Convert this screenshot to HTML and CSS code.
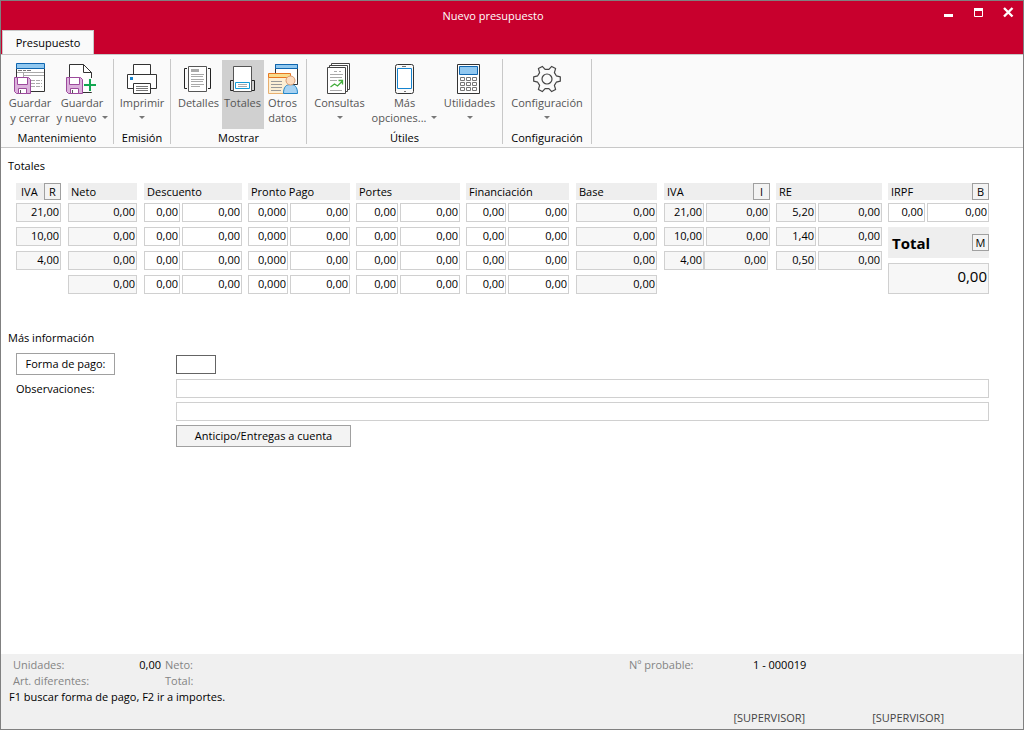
FILE: index.html
```html
<!DOCTYPE html>
<html lang="es">
<head>
<meta charset="utf-8">
<meta name="viewport" content="width=device-width, initial-scale=1">
<title>Nuevo presupuesto</title>
<link rel="stylesheet" href="styles.css">
</head>
<body>
<svg class="defs" width="0" height="0" aria-hidden="true">
  <symbol id="floppy" viewBox="0 0 17 17">
    <path d="M.5.5h14l2 2v14H2.500l-2-2z" fill="#dcb2dc" stroke="#9c4a9c"/>
    <path d="M3.500.5h10v7h-10z" fill="#fff" stroke="#9c4a9c"/>
    <path d="M4.500 16.500v-5h8v5z" fill="#fff" stroke="#9c4a9c"/>
    <path d="M6.500 13v3" stroke="#555"/>
  </symbol>
</svg>
<div class="window">
  <header class="titlebar">
    <div class="titlebar-row">
      <h1 class="title">Nuevo presupuesto</h1>
      <div class="controls">
        <button class="control" aria-label="Minimizar"><svg width="11" height="11"><path d="M1 7h9v3H1z" fill="#fff"/></svg></button>
        <button class="control" aria-label="Maximizar"><svg width="11" height="11"><path d="M1.500 1.500h8v8h-8z" fill="none" stroke="#fff"/><path d="M1 1h9v3H1z" fill="#fff"/></svg></button>
        <button class="control" aria-label="Cerrar"><svg width="11" height="11"><path d="M1 1l8.500 8.500M9.500 1L1 9.500" stroke="#fff" stroke-width="2.400"/></svg></button>
      </div>
    </div>
    <div class="tabs"><button class="tab">Presupuesto</button></div>
  </header>

  <nav class="ribbon">
    <section class="group group-save">
      <div class="tools">
        <button class="tool">
          <svg class="icon" width="32" height="32" fill="none">
            <path d="M2.500 6.500h28v23h-28z" fill="#fff" stroke="#333"/>
            <path d="M2.500 1.500h28v5h-28z" fill="#91c8f0" stroke="#0f66b0"/>
            <path d="M4 8.500h4m1 0h3m1 0h4" stroke="#777"/>
            <path d="M3 10.500h27M9.500 11v4M10 13.500h20" stroke="#aaa"/>
            <path d="M17 18.500h11M17 21.500h11M17 24.500h11" stroke="#aaa" stroke-dasharray="4 1"/>
            <use href="#floppy" y="15" width="17" height="17"/>
          </svg>
          <span>Guardar</span><span>y cerrar</span>
        </button>
        <button class="tool">
          <svg class="icon" width="32" height="32" fill="none">
            <path d="M3.500 2.500h14l8 8v20h-22z" fill="#fff" stroke="#333"/>
            <path d="M17.500 2.500v8h8M18 3l7 7" stroke="#333"/>
            <use href="#floppy" y="15" width="17" height="17"/>
            <path d="M24 16v14M17 23h14" stroke="#fafafa" stroke-width="4"/>
            <path d="M24 17v12M18 23h12" stroke="#12a650" stroke-width="2"/>
          </svg>
          <span>Guardar</span><span class="drop">y nuevo</span>
        </button>
      </div>
      <h2 class="group-name">Mantenimiento</h2>
    </section>
    <section class="group group-print">
      <div class="tools">
        <button class="tool">
          <svg class="icon" width="32" height="32" fill="none" stroke="#333">
            <path d="M7.500 2.500h17v10h-17z" fill="#fff"/>
            <path d="M1.500 12.500h29v14h-29z" fill="#fff"/>
            <path d="M7.500 21.500h17v10h-17z" fill="#fff"/>
            <path d="M10 24.500h12M10 26.500h12M10 28.500h12" stroke="#777"/>
            <path d="M4 15h3v3H4z" fill="#1684cf" stroke="none"/>
          </svg>
          <span>Imprimir</span><span class="drop"></span>
        </button>
      </div>
      <h2 class="group-name">Emisión</h2>
    </section>
    <section class="group group-show">
      <div class="tools">
        <button class="tool tool-details">
          <svg class="icon" viewBox="1 0 32 32" width="32" height="32" fill="none">
            <path d="M6.500 4.500h18v25h-18z" fill="#fff" stroke="#555"/>
            <path d="M5 6.500H2.500v20H5M26 6.500h2.500v20H26" stroke="#222"/>
            <path d="M9 7h8v3H9z" fill="#aaa"/>
            <path d="M9 12.500h13M9 14.500h12M9 17.500h13M9 19.500h12M9 22.500h13M9 24.500h9" stroke="#aaa"/>
          </svg>
          <span>Detalles</span>
        </button>
        <button class="tool tool-totals" aria-pressed="true">
          <svg class="icon" width="32" height="32" fill="none">
            <path d="M6.500 4.500h18v25h-18z" fill="#fff" stroke="#555"/>
            <path d="M6 18.500H3.500v10H6M25 18.500h2.500v10H25" stroke="#222"/>
            <path d="M8.500 20.500h14v6h-14z" fill="#fff" stroke="#159bd7"/>
            <path d="M11 22.500h9M11 24.500h9" stroke="#aaa"/>
          </svg>
          <span>Totales</span>
        </button>
        <button class="tool tool-other">
          <svg class="icon" width="32" height="32" fill="none">
            <path d="M8.500 2.500h22v20h-22z" fill="#fff" stroke="#333"/>
            <path d="M8.500 2.500h22v4h-22z" fill="#91c8f0" stroke="#0f66b0"/>
            <path d="M1.500 15.500h22v16h-22z" fill="#fcefd5" stroke="#e8b070"/>
            <path d="M1.500 11.500h22v4h-22z" fill="#f9dc8c" stroke="#e87722"/>
            <path d="M4 19.500h11M4 22.500h11M4 25.500h11M4 28.500h10" stroke="#999"/>
            <path d="M16.500 31.500c0-7 3-9 7-9s7 2 7 9z" fill="#a7d2f2" stroke="#2085c8"/>
            <circle cx="23.500" cy="18.500" r="4.500" fill="#fcdcc0" stroke="#d99a70"/>
          </svg>
          <span>Otros</span><span>datos</span>
        </button>
      </div>
      <h2 class="group-name">Mostrar</h2>
    </section>
    <section class="group group-utils">
      <div class="tools">
        <button class="tool">
          <svg class="icon" viewBox="-1 0 32 32" width="32" height="32" fill="none">
            <path d="M7.500 1.500h18v26h-18z" fill="#fff" stroke="#444"/>
            <path d="M5.500 3.500h18v26h-18z" fill="#fff" stroke="#444"/>
            <path d="M3.500 5.500h18v26h-18z" fill="#fff" stroke="#444"/>
            <path d="M10 9.500h3m2 0h2M6 12.500h13M6 15.500h12M6 18.500h7M6 28.500h12" stroke="#aaa"/>
            <path d="M6.500 25l4-3 3 2 5-5M14.500 18.500h4v4" stroke="#43ad3c" stroke-width="1.300"/>
          </svg>
          <span>Consultas</span><span class="drop"></span>
        </button>
        <button class="tool">
          <svg class="icon" width="32" height="32" fill="none">
            <rect x="7.500" y="2.500" width="18" height="29" rx="2" fill="#fafafa" stroke="#333"/>
            <path d="M9.500 6.500h14v20h-14z" fill="#fff" stroke="#1684cf"/>
            <path d="M14 4.500h4M16 29.500h2" stroke="#777"/>
          </svg>
          <span>Más</span><span class="drop">opciones...</span>
        </button>
        <button class="tool">
          <svg class="icon" width="32" height="32" fill="none">
            <path d="M4.500 2.500h22v29h-22z" fill="#fff" stroke="#333"/>
            <path d="M6.500 4.500h18v8h-18z" fill="#91c8f0" stroke="#0f66b0"/>
            <path d="M7.500 15.500h4v3h-4zM13.500 15.500h4v3h-4zM19.500 15.500h4v3h-4zM7.500 20.500h4v3h-4zM13.500 20.500h4v3h-4zM19.500 20.500h4v3h-4zM7.500 25.500h4v3h-4zM13.500 25.500h4v3h-4zM19.500 25.500h4v3h-4z" stroke="#777"/>
          </svg>
          <span>Utilidades</span><span class="drop"></span>
        </button>
      </div>
      <h2 class="group-name">Útiles</h2>
    </section>
    <section class="group group-config">
      <div class="tools">
        <button class="tool">
          <svg class="icon" width="32" height="32" fill="none" stroke="#444" stroke-width="1.200" stroke-linejoin="round">
            <path d="M25.300 13.800L29.300 14.800V19.200L25.300 20.200L23.400 23.400L24.600 27.400L20.700 29.600L17.900 26.600H14.100L11.300 29.600L7.400 27.400L8.600 23.400L6.700 20.200L2.700 19.200V14.800L6.700 13.800L8.600 10.600L7.400 6.600L11.300 4.400L14.100 7.400H17.900L20.700 4.400L24.600 6.600L23.400 10.600z"/>
            <circle cx="16" cy="17" r="5"/>
          </svg>
          <span>Configuración</span><span class="drop"></span>
        </button>
      </div>
      <h2 class="group-name">Configuración</h2>
    </section>
  </nav>

  <main class="content">
    <h2 class="section-name">Totales</h2>
    <div class="totals">
      <section class="column short">
        <div class="head"><span>IVA</span><button class="key">R</button></div>
        <input class="field locked" aria-label="IVA 1" value="21,00" readonly>
        <input class="field locked" aria-label="IVA 2" value="10,00" readonly>
        <input class="field locked" aria-label="IVA 3" value="4,00" readonly>
      </section>
      <section class="column short">
        <div class="head">Neto</div>
        <input class="field locked" aria-label="Neto 1" value="0,00" readonly>
        <input class="field locked" aria-label="Neto 2" value="0,00" readonly>
        <input class="field locked" aria-label="Neto 3" value="0,00" readonly>
        <input class="field locked" aria-label="Neto 4" value="0,00" readonly>
      </section>
      <section class="column">
        <div class="head">Descuento</div>
        <div class="pair pair-36"><input class="field" aria-label="Descuento % 1" value="0,00"><input class="field" aria-label="Descuento 1" value="0,00"></div>
        <div class="pair pair-36"><input class="field" aria-label="Descuento % 2" value="0,00"><input class="field" aria-label="Descuento 2" value="0,00"></div>
        <div class="pair pair-36"><input class="field" aria-label="Descuento % 3" value="0,00"><input class="field" aria-label="Descuento 3" value="0,00"></div>
        <div class="pair pair-36"><input class="field" aria-label="Descuento % 4" value="0,00"><input class="field" aria-label="Descuento 4" value="0,00"></div>
      </section>
      <section class="column">
        <div class="head">Pronto Pago</div>
        <div class="pair"><input class="field" aria-label="Pronto Pago % 1" value="0,000"><input class="field" aria-label="Pronto Pago 1" value="0,00"></div>
        <div class="pair"><input class="field" aria-label="Pronto Pago % 2" value="0,000"><input class="field" aria-label="Pronto Pago 2" value="0,00"></div>
        <div class="pair"><input class="field" aria-label="Pronto Pago % 3" value="0,000"><input class="field" aria-label="Pronto Pago 3" value="0,00"></div>
        <div class="pair"><input class="field" aria-label="Pronto Pago % 4" value="0,000"><input class="field" aria-label="Pronto Pago 4" value="0,00"></div>
      </section>
      <section class="column">
        <div class="head">Portes</div>
        <div class="pair pair-42"><input class="field" aria-label="Portes % 1" value="0,00"><input class="field" aria-label="Portes 1" value="0,00"></div>
        <div class="pair pair-42"><input class="field" aria-label="Portes % 2" value="0,00"><input class="field" aria-label="Portes 2" value="0,00"></div>
        <div class="pair pair-42"><input class="field" aria-label="Portes % 3" value="0,00"><input class="field" aria-label="Portes 3" value="0,00"></div>
        <div class="pair pair-42"><input class="field" aria-label="Portes % 4" value="0,00"><input class="field" aria-label="Portes 4" value="0,00"></div>
      </section>
      <section class="column short">
        <div class="head">Financiación</div>
        <div class="pair"><input class="field" aria-label="Financiación % 1" value="0,00"><input class="field" aria-label="Financiación 1" value="0,00"></div>
        <div class="pair"><input class="field" aria-label="Financiación % 2" value="0,00"><input class="field" aria-label="Financiación 2" value="0,00"></div>
        <div class="pair"><input class="field" aria-label="Financiación % 3" value="0,00"><input class="field" aria-label="Financiación 3" value="0,00"></div>
        <div class="pair"><input class="field" aria-label="Financiación % 4" value="0,00"><input class="field" aria-label="Financiación 4" value="0,00"></div>
      </section>
      <section class="column short">
        <div class="head">Base</div>
        <input class="field locked" aria-label="Base 1" value="0,00" readonly>
        <input class="field locked" aria-label="Base 2" value="0,00" readonly>
        <input class="field locked" aria-label="Base 3" value="0,00" readonly>
        <input class="field locked" aria-label="Base 4" value="0,00" readonly>
      </section>
      <section class="column">
        <div class="head"><span>IVA</span><button class="key">I</button></div>
        <div class="pair"><input class="field locked" aria-label="IVA % 1" value="21,00" readonly><input class="field locked" aria-label="Cuota IVA 1" value="0,00" readonly></div>
        <div class="pair"><input class="field locked" aria-label="IVA % 2" value="10,00" readonly><input class="field locked" aria-label="Cuota IVA 2" value="0,00" readonly></div>
        <div class="pair joined"><input class="field locked" aria-label="IVA % 3" value="4,00" readonly><input class="field locked" aria-label="Cuota IVA 3" value="0,00" readonly></div>
      </section>
      <section class="column">
        <div class="head">RE</div>
        <div class="pair"><input class="field locked" aria-label="RE % 1" value="5,20" readonly><input class="field locked" aria-label="RE 1" value="0,00" readonly></div>
        <div class="pair"><input class="field locked" aria-label="RE % 2" value="1,40" readonly><input class="field locked" aria-label="RE 2" value="0,00" readonly></div>
        <div class="pair"><input class="field locked" aria-label="RE % 3" value="0,50" readonly><input class="field locked" aria-label="RE 3" value="0,00" readonly></div>
      </section>
      <section class="column">
        <div class="head"><span>IRPF</span><button class="key">B</button></div>
        <div class="pair pair-36"><input class="field" aria-label="IRPF %" value="0,00"><input class="field" aria-label="IRPF" value="0,00"></div>
        <div class="head head-total"><label for="total">Total</label><button class="key">M</button></div>
        <input class="field locked field-total" id="total" value="0,00" readonly>
      </section>
    </div>

    <h2 class="section-name">Más información</h2>
    <div class="form">
      <button class="button button-plain">Forma de pago:</button>
      <input class="text text-code" aria-label="Forma de pago">
      <label class="caption" for="obs1">Observaciones:</label>
      <input class="text" id="obs1">
      <input class="text second" aria-label="Observaciones, línea 2">
      <button class="button second">Anticipo/Entregas a cuenta</button>
    </div>
  </main>

  <footer class="status">
    <div class="facts">
      <span>Unidades:</span><span class="value amount">0,00</span><span>Neto:</span><span>Nº probable:</span><span class="value">1 - 000019</span>
      <span>Art. diferentes:</span><span></span><span>Total:</span>
    </div>
    <p class="hint">F1 buscar forma de pago, F2 ir a importes.</p>
    <div class="users"><span>[SUPERVISOR]</span><span>[SUPERVISOR]</span></div>
  </footer>
</div>
</body>
</html>
```
FILE: styles.css
```css
* { box-sizing: border-box; }

body {
  margin: 0;
  font: 11px/16px "Open Sans", "Noto Sans", sans-serif;
  color: #000;
  background: #fff;
}

button, input { font: inherit; color: inherit; margin: 0; border-radius: 0; }
h1, h2, p { margin: 0; font-size: inherit; font-weight: 400; }
.defs { display: block; height: 0; }

.window {
  display: flex;
  flex-direction: column;
  min-height: 100vh;
  border: 1px solid #808080;
}

/* Title bar */
.titlebar { background: #c8002d; }
.titlebar-row { display: flex; align-items: flex-start; height: 29px; padding-left: 52px; }
.title { flex: 1; padding-top: 7px; text-align: center; color: #fff; }
.controls { display: flex; }
.control {
  display: flex;
  align-items: center;
  justify-content: center;
  width: 30px;
  height: 23px;
  padding: 0;
  border: 0;
  background: none;
}
.tabs { display: flex; height: 24px; padding-left: 1px; }
.tab {
  width: 92px;
  padding: 0;
  border: 1px solid #c8c8c8;
  border-bottom: 0;
  background: #fafafa;
}

/* Ribbon */
.ribbon {
  display: flex;
  height: 94px;
  padding: 4px 0 3px;
  background: #fafafa;
  border-top: 1px solid #c8c8c8;
  border-bottom: 1px solid #c8c8c8;
}
.group { display: flex; flex-direction: column; border-right: 1px solid #c8c8c8; }
.tools { display: flex; justify-content: center; height: 72px; padding-top: 1px; }
.group-name { line-height: 18px; text-align: center; }
.group-save { width: 113px; }
.group-save .tools { justify-content: flex-start; padding-left: 3px; }
.group-print { width: 57px; }
.group-show { width: 136px; }
.group-utils { width: 196px; }
.group-config { width: 89px; }
.tool {
  display: flex;
  flex-direction: column;
  align-items: center;
  width: 52px;
  height: 69px;
  padding: 2px 0 0;
  border: 0;
  background: none;
  color: #555;
  line-height: 15px;
  white-space: nowrap;
}
.tool span { height: 15px; }
.icon { flex: none; margin-bottom: 1px; }
.group-utils .tool { width: 65px; }
.group-utils .icon { margin-right: 1px; }
.group-config .tool { width: 88px; }
.tool-details { width: 46px; }
.tool-totals { width: 42px; background: #d0d0d0; }
.tool-other { width: 38px; }
.drop { display: flex; align-items: center; gap: 5px; }
.drop::after {
  content: "";
  border: 3px solid transparent;
  border-top-color: #777;
  border-bottom: 0;
}

/* Totals */
.content { flex: 1; padding: 10px 34px 0 15px; }
.section-name { margin-left: -8px; }
.totals {
  display: grid;
  grid-template-columns: 46fr 70fr 98fr 102fr 104fr 104fr 82fr 106fr 106fr 101fr;
  gap: 6px;
  margin: 9px 0 36px;
}
.column { display: flex; flex-direction: column; gap: 5px; min-width: 0; }
.short { padding-right: 1px; }
.head {
  display: flex;
  align-items: center;
  justify-content: space-between;
  height: 17px;
  margin-bottom: -2px;
  padding-left: 3px;
  background: #eee;
}
.short .head:has(.key) { padding-left: 5px; }
.key {
  width: 17px;
  height: 17px;
  padding: 0;
  border: 1px solid #a0a0a0;
  background: #f3f3f3;
  line-height: 14px;
}
.field, .text { width: 100%; height: 19px; padding: 0 1px 2px; border: 1px solid #d0d0d0; background: #fff; }
.field { min-width: 0; text-align: right; }
.locked { background: #f7f7f7; }
.pair { display: grid; grid-template-columns: 40fr 60fr; gap: 2px; }
.pair:has(.locked) { grid-template-columns: 40fr 64fr; }
.pair-36 { grid-template-columns: 36fr 60fr; }
.pair-42 { grid-template-columns: 42fr 60fr; }
.pair.joined { gap: 0; padding-right: 2px; }
.head-total { height: 31px; margin-bottom: 0; padding-left: 4px; font-size: 15px; font-weight: 700; }
.head-total .key { font-size: 11px; font-weight: 400; }
.field-total { height: 31px; padding-bottom: 5px; font-size: 15px; }

/* Payment form */
.form {
  display: grid;
  grid-template-columns: 160px 1fr;
  row-gap: 4px;
  align-items: center;
  margin-top: 7px;
}
.second { grid-column: 2; }
.button {
  width: 175px;
  height: 22px;
  padding: 0;
  border: 1px solid #a0a0a0;
  background: #f3f3f3;
}
.button-plain { width: 99px; background: #fff; }
.text-code { width: 40px; border-color: #646464; }
.caption { line-height: 19px; }

/* Status bar */
.status { min-height: 75px; padding: 3px 79px 3px 8px; background: #f0f0f0; }
.facts {
  display: grid;
  grid-template-columns: 112px 40px 464fr 124px 191fr;
  padding-left: 4px;
  color: #848484;
}
.value { color: #000; }
.amount { padding-right: 4px; text-align: right; }
.users { display: flex; justify-content: flex-end; gap: 67px; margin-top: 5px; color: #444; }
```
